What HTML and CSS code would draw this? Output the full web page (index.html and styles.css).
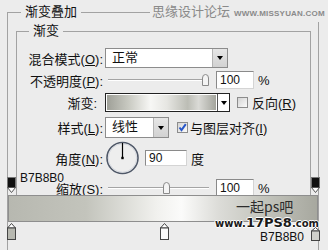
FILE: index.html
```html
<!DOCTYPE html>
<html lang="zh-CN">
<head>
    <meta charset="UTF-8">
    <title>渐变叠加</title>
    <link rel="stylesheet" href="styles.css">
</head>
<body>
    <fieldset class="group outer">
        <legend>渐变叠加</legend>
        <fieldset class="group inner">
            <legend>渐变</legend>

            <div class="row r1">
                <span class="lbl">混合模式(<u>O</u>):</span>
                <div class="select wide"><span class="val">正常</span><span class="arrow"></span></div>
            </div>

            <div class="row r2">
                <span class="lbl">不透明度(<u>P</u>):</span>
                <div class="slider">
                    <span class="track"></span>
                    <svg width="7" height="12" viewBox="0 0 7 12"><path d="M0.5 4 Q0.5 0.5 3.5 0.5 Q6.5 0.5 6.5 4 V11.5 H0.5 Z" fill="#f4f4f4" stroke="#8a8a8a"/></svg>
                </div>
                <div class="field">100</div>
                <span class="unit">%</span>
            </div>

            <div class="row r3">
                <span class="lbl short">渐变:</span>
                <div class="swatch"><span class="grad"></span><span class="arrow"></span></div>
                <span class="check"></span>
                <span class="opt">反向(<u>R</u>)</span>
            </div>

            <div class="row r4">
                <span class="lbl">样式(<u>L</u>):</span>
                <div class="select narrow"><span class="val">线性</span><span class="arrow"></span></div>
                <span class="check on">
                    <svg width="9" height="9" viewBox="0 0 9 9"><path d="M1.5 4.5 L3.5 7 L7.8 1.2" fill="none" stroke="#2656c8" stroke-width="2"/></svg>
                </span>
                <span class="opt tight">与图层对齐(<u>I</u>)</span>
            </div>

            <div class="row r5">
                <span class="lbl">角度(<u>N</u>):</span>
                <svg class="dial" width="35" height="34" viewBox="0 0 35 34">
                    <circle cx="17.5" cy="17" r="15.5" fill="#eeeeee" stroke="#4f5868" stroke-width="1.6"/>
                    <circle cx="17.5" cy="17" r="14.2" fill="none" stroke="#cfd3da" stroke-width="0.8"/>
                    <line x1="17.5" y1="17" x2="17.5" y2="2" stroke="#000" stroke-width="1.2"/>
                    <rect x="16.3" y="15.8" width="2.4" height="2.4" fill="#000"/>
                </svg>
                <div class="field deg">90</div>
                <span class="unit">度</span>
            </div>

            <div class="row r6">
                <span class="lbl">缩放(<u>S</u>):</span>
                <div class="slider">
                    <span class="track"></span>
                    <svg width="7" height="12" viewBox="0 0 7 12"><path d="M0.5 4 Q0.5 0.5 3.5 0.5 Q6.5 0.5 6.5 4 V11.5 H0.5 Z" fill="#f4f4f4" stroke="#8a8a8a"/></svg>
                    <span class="track rest"></span>
                </div>
                <div class="field">100</div>
                <span class="unit">%</span>
            </div>
        </fieldset>
    </fieldset>

    <div class="wm-top"><span class="wm-cn">思缘设计论坛</span><span class="wm-en">WWW.MISSYUAN.COM</span></div>

    <div class="editor">
        <div class="stops-top">
            <svg width="9" height="16" viewBox="0 0 9 16"><rect x="0.5" y="0.5" width="8" height="10" fill="#111" stroke="#777"/><path d="M0.5 10.5 H8.5 L4.5 15.5 Z" fill="#fff" stroke="#555"/></svg>
            <span class="hex">B7B8B0</span>
            <svg class="push" width="9" height="16" viewBox="0 0 9 16"><rect x="0.5" y="0.5" width="8" height="10" fill="#111" stroke="#777"/><path d="M0.5 10.5 H8.5 L4.5 15.5 Z" fill="#fff" stroke="#555"/></svg>
        </div>
        <div class="bar"></div>
        <div class="stops-bottom">
            <svg width="9" height="17" viewBox="0 0 9 17"><path d="M4.5 0.5 L8.5 5 H0.5 Z" fill="#fff" stroke="#444"/><rect x="0.5" y="5" width="8" height="11.5" fill="#b7b8b0" stroke="#444"/></svg>
            <svg class="mid" width="9" height="17" viewBox="0 0 9 17"><path d="M4.5 0.5 L8.5 5 H0.5 Z" fill="#fff" stroke="#444"/><rect x="0.5" y="5" width="8" height="11.5" fill="#fafafa" stroke="#444"/></svg>
            <span class="hex push">B7B8B0</span>
            <svg class="last" width="9" height="14" viewBox="0 0 9 14"><path d="M4.5 0.5 L8.5 4 H0.5 Z" fill="#fff" stroke="#444"/><rect x="0.5" y="4" width="8" height="9.5" fill="#cfcfca" stroke="#444"/></svg>
        </div>
    </div>

    <div class="wm-cn2">一起ps吧</div>
    <div class="wm-url"><span class="sm">www.</span>17PS8<span class="sm">.com</span></div>
</body>
</html>
```

FILE: styles.css
```css
html, body {
    margin: 0;
    padding: 0;
    height: 250px;
    overflow: hidden;
}
body {
    position: relative;
    background-color: #ececec;
    font-family: "Liberation Sans", "Noto Sans CJK SC", sans-serif;
    font-size: 13px;
    color: #111;
}
u {
    text-decoration: underline;
}
.group {
    border: 1px solid #a2a2a2;
    margin: 0;
    min-width: 0;
}
.group > legend {
    height: 16px;
    line-height: 16px;
    padding: 0 4px;
    font-size: 13px;
}
.outer {
    margin: 4px 9px 0 7px;
    padding: 0 7px 40px 8px;
    border-bottom: 0;
}
.outer > legend {
    margin-left: 5px;
}
.inner {
    margin: 3px 0 0;
    padding: 9px 0 12px;
}
.inner > legend {
    margin-left: 12px;
}
.row {
    display: flex;
    align-items: center;
}
.lbl {
    flex: none;
    width: 86px;
    margin-right: 2px;
    text-align: right;
    white-space: nowrap;
}
.lbl.short {
    width: 80px;
    margin-right: 8px;
}
.r1 { height: 20px; }
.r2 { height: 18px; margin-top: 3px; }
.r3 { height: 19px; margin-top: 4px; }
.r4 { height: 21px; margin-top: 5px; }
.r5 { height: 34px; margin-top: 3px; }
.r6 { height: 18px; margin-top: 4px; }

.select {
    display: flex;
    box-sizing: border-box;
    height: 100%;
    border: 1px solid #8c8c8c;
    background: #fff;
}
.select.wide { width: 123px; }
.select.narrow { width: 64px; }
.select .val {
    flex: 1;
    padding-left: 6px;
    line-height: 18px;
}
.select .arrow {
    width: 14px;
    background: linear-gradient(#e6e6e6, #d2d2d2);
    border-left: 1px solid #b4b4b4;
    display: flex;
    align-items: center;
    justify-content: center;
}
.select .arrow::after,
.swatch .arrow::after {
    content: "";
    border-left: 3.5px solid transparent;
    border-right: 3.5px solid transparent;
    border-top: 4px solid #000;
}
.slider {
    display: flex;
    align-items: center;
    width: 101px;
    margin-left: 3px;
}
.slider .track {
    flex: 1;
    height: 0;
    border-top: 1px solid #a4a4a4;
    border-bottom: 1px solid #fff;
}
.slider .track.rest {
    flex: none;
    width: 39px;
}
.slider svg {
    flex: none;
}
.field {
    box-sizing: border-box;
    width: 38px;
    height: 18px;
    margin-left: 7px;
    padding-left: 3px;
    border: 1px solid;
    border-color: #8a8a8a #d4d4d4 #d4d4d4 #8a8a8a;
    background: #fff;
    font-size: 12px;
    line-height: 16px;
}
.field.deg {
    width: 42px;
    height: 16px;
    line-height: 14px;
    margin-left: 5px;
}
.unit {
    margin-left: 4px;
}
.swatch {
    display: flex;
    box-sizing: border-box;
    width: 125px;
    height: 19px;
    border: 1px solid #222;
    background: #fff;
}
.swatch .grad {
    flex: 1;
    margin: 1px;
    background: linear-gradient(to right, #9fa098 0%, #c9cac2 20%, #f7f7f5 40%, #e6e6e2 55%, #bcbdb5 74%, #dadad6 84%, #a4a59d 100%);
}
.swatch .arrow {
    width: 11px;
    border-left: 1px solid #555;
    display: flex;
    align-items: center;
    justify-content: center;
}
.check {
    flex: none;
    box-sizing: border-box;
    width: 11px;
    height: 11px;
    margin-left: 7px;
    border: 1px solid #8c8c8c;
    background: linear-gradient(135deg, #d4d4d4, #fbfbfb);
    display: flex;
    align-items: center;
    justify-content: center;
}
.check.on {
    margin-left: 8px;
}
.opt {
    margin-left: 4px;
}
.opt.tight {
    margin-left: 2px;
}
.dial {
    flex: none;
}

.wm-top {
    position: absolute;
    left: 150px;
    top: 4px;
    padding: 0 1px 0 2px;
    background: #ececec;
    color: #8a8a8a;
    line-height: 16px;
    white-space: nowrap;
}
.wm-cn {
    font-size: 13px;
}
.wm-en {
    margin-left: 4px;
    font-size: 8px;
    font-weight: bold;
    letter-spacing: 0.2px;
}

.editor {
    position: absolute;
    left: 7px;
    top: 172px;
    width: 313px;
}
.stops-top {
    display: flex;
    align-items: flex-end;
    height: 21px;
}
.hex {
    font-family: "Liberation Sans", sans-serif;
    font-size: 12px;
    line-height: 12px;
    color: #111;
}
.stops-top .hex {
    align-self: flex-start;
    margin-left: 4px;
}
.push {
    margin-left: auto;
}
.bar {
    box-sizing: border-box;
    width: 310px;
    height: 27px;
    margin: 2px 0 0 1px;
    border: 1px solid #8e8e8e;
    background: linear-gradient(to right, #b7b8b0 0%, #c3c4bc 25%, #f1f1ee 48%, #fbfbfa 56%, #dcdcd8 68%, #c4c5bd 82%, #a7a89f 100%);
}
.stops-bottom {
    display: flex;
    align-items: flex-start;
    height: 26px;
    padding-top: 1px;
}
.stops-bottom .mid {
    margin-left: 144px;
}
.stops-bottom .hex {
    margin-top: 8px;
    margin-right: 7px;
}
.stops-bottom .last {
    margin-top: 4px;
}

.wm-cn2 {
    position: absolute;
    left: 236px;
    top: 198px;
    font-family: "Noto Sans CJK SC", sans-serif;
    font-size: 14px;
    line-height: 17px;
    color: #2c2c2c;
}
.wm-url {
    position: absolute;
    left: 215px;
    top: 216px;
    font-family: "DejaVu Sans", sans-serif;
    font-weight: bold;
    font-size: 13px;
    line-height: 13px;
    color: #1a1a1a;
    white-space: nowrap;
    text-shadow: 1px 0 0 #fff, -1px 0 0 #fff, 0 1px 0 #fff, 0 -1px 0 #fff;
}
.wm-url .sm {
    font-size: 10px;
}
```
